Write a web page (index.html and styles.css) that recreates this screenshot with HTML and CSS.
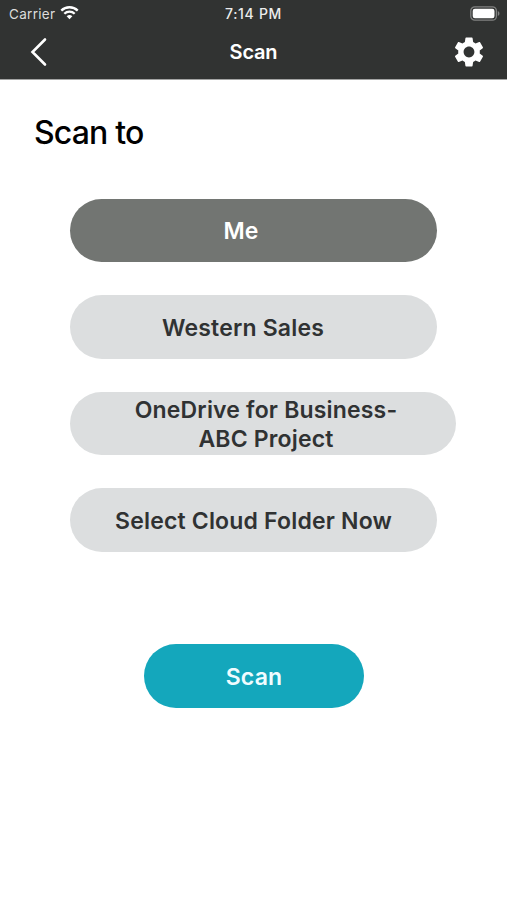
FILE: index.html
```html
<!DOCTYPE html>
<html lang="en">
<head>
    <meta charset="UTF-8">
    <meta name="viewport" content="width=device-width, initial-scale=1.0">
    <title>Scan</title>
    <link rel="stylesheet" href="styles.css">
</head>
<body>

<header>
    <div class="status-bar">
        <div class="carrier">
            <span>Carrier</span>
            <svg class="wifi" width="19" height="15" viewBox="0 0 18 14">
                <path d="M1.2 5.2a11.2 11.2 0 0 1 15.6 0M4.1 8.2a7 7 0 0 1 9.8 0" fill="none" stroke="#fff" stroke-width="2.2"/>
                <path d="M9 13.4L6.3 10.6a3.9 3.9 0 0 1 5.4 0z" fill="#fff"/>
            </svg>
        </div>
        <div class="time">7:14 PM</div>
        <svg class="battery" width="31" height="15" viewBox="0 0 31 15">
            <rect x="0.8" y="0.8" width="25.6" height="13.4" rx="4" fill="none" stroke="#818281" stroke-width="1.3"/>
            <rect x="2.7" y="2.7" width="21.8" height="9.6" rx="2.2" fill="#fff"/>
            <path d="M27.8 5c2.2.8 2.2 4.2 0 5z" fill="#818281"/>
        </svg>
    </div>
    <nav>
        <a class="back" href="#" aria-label="Back">
            <svg width="18" height="30" viewBox="0 0 18 30">
                <path d="M15 2.5L2.5 15 15 27.5" fill="none" stroke="#fff" stroke-width="2.6" stroke-linecap="round"/>
            </svg>
        </a>
        <h1>Scan</h1>
        <a class="settings" href="#" aria-label="Settings">
            <svg width="36" height="36" viewBox="0 0 24 24">
                <path fill="#fff" d="M19.14 12.94c.04-.3.06-.61.06-.94 0-.32-.02-.64-.07-.94l2.03-1.58c.18-.14.23-.41.12-.61l-1.92-3.32c-.12-.22-.37-.29-.59-.22l-2.39.96c-.5-.38-1.03-.7-1.62-.94l-.36-2.54c-.04-.24-.24-.41-.48-.41h-3.84c-.24 0-.43.17-.47.41l-.36 2.54c-.59.24-1.13.57-1.62.94l-2.39-.96c-.22-.08-.47 0-.59.22L2.74 8.87c-.12.21-.08.47.12.61l2.03 1.58c-.05.3-.09.63-.09.94s.02.64.07.94l-2.03 1.58c-.18.14-.23.41-.12.61l1.92 3.32c.12.22.37.29.59.22l2.39-.96c.5.38 1.03.7 1.62.94l.36 2.54c.05.24.24.41.48.41h3.84c.24 0 .44-.17.47-.41l.36-2.54c.59-.24 1.13-.56 1.62-.94l2.39.96c.22.08.47 0 .59-.22l1.92-3.32c.12-.22.07-.47-.12-.61l-2.01-1.58zM12 15.6c-1.98 0-3.6-1.62-3.6-3.6s1.62-3.6 3.6-3.6 3.6 1.62 3.6 3.6-1.62 3.6-3.6 3.6z"/>
            </svg>
        </a>
    </nav>
</header>

<main>
    <h2>Scan to</h2>
    <div class="destinations">
        <button class="button selected">Me</button>
        <button class="button sales">Western Sales</button>
        <button class="button wide">OneDrive for Business-<br>ABC Project</button>
        <button class="button">Select Cloud Folder Now</button>
    </div>
    <button class="button scan">Scan</button>
</main>

</body>
</html>
```
FILE: styles.css
```css
body {
    font-family: Inter, "Liberation Sans", sans-serif;
    margin: 0;
    background-color: #fff;
    color: #000;
}
header {
    box-sizing: border-box;
    height: 80px;
    border-bottom: 1px solid #a3a4a3;
    background-color: #313332;
    color: #fff;
}
.status-bar {
    display: grid;
    grid-template-columns: 1fr auto 1fr;
    align-items: center;
    height: 27px;
    padding: 0 6px 0 9px;
    font-size: 13.5px;
}
.carrier {
    display: flex;
    align-items: center;
    gap: 5px;
    color: #dcdddc;
    letter-spacing: 0.3px;
}
.wifi {
    margin-top: -3px;
}
.time {
    margin-left: -3px;
    font-size: 14px;
    font-weight: 500;
    letter-spacing: 0.7px;
    color: #ececec;
}
.battery {
    justify-self: end;
}
nav {
    display: grid;
    grid-template-columns: 1fr auto 1fr;
    align-items: center;
    height: 50px;
    padding: 0 20px;
}
.back {
    display: flex;
    margin-left: 10px;
}
.settings {
    display: flex;
    justify-self: end;
}
h1 {
    margin: 0;
    font-size: 20px;
    font-weight: 600;
    letter-spacing: -0.2px;
}
main {
    display: flex;
    flex-direction: column;
    padding: 34px 0 0 34px;
}
h2 {
    margin: 0;
    font-size: 32px;
    line-height: 38px;
    font-weight: 500;
    letter-spacing: -0.85px;
}
.destinations {
    display: flex;
    flex-direction: column;
    gap: 33px;
    margin: 46.6px 0 92.8px 36px;
}
.button {
    box-sizing: border-box;
    width: 367px;
    height: 63.5px;
    padding: 3px 0 0;
    border: none;
    border-radius: 32px;
    background-color: #dcdedf;
    color: #303233;
    font-family: inherit;
    font-size: 23px;
    line-height: 29px;
    font-weight: 600;
    letter-spacing: 0.18px;
    cursor: pointer;
}
.button.selected {
    padding-right: 25px;
    background-color: #727572;
    color: #fff;
}
.button.sales {
    padding-right: 21px;
}
.button.wide {
    width: 386px;
    padding-left: 6px;
}
.button.scan {
    width: 220px;
    margin-left: 110px;
    background-color: #14a7bc;
    color: #f0fcff;
}
```
